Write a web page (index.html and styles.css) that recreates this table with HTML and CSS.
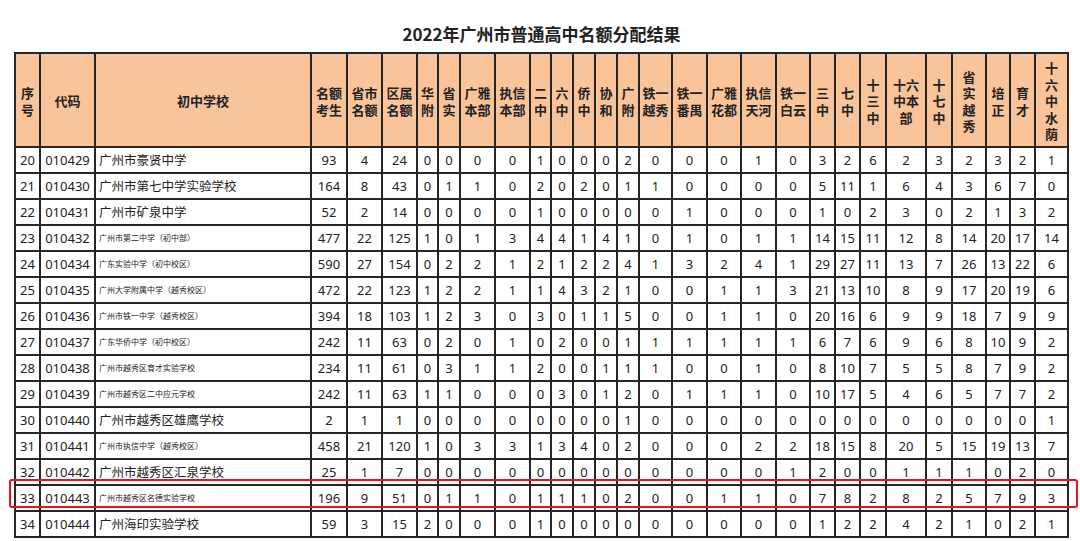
FILE: index.html
```html
<!DOCTYPE html>
<html lang="zh-CN">
<head>
<meta charset="utf-8">
<title>2022年广州市普通高中名额分配结果</title>
<link rel="stylesheet" href="styles.css">
</head>
<body>
<div class="page">
  <h1 class="title">2022年广州市普通高中名额分配结果</h1>
  <div class="sheet">
    <table class="quota">
      <colgroup>
        <col class="w25"><col class="w55"><col class="w216"><col class="w36"><col class="w35"><col class="w35">
        <col class="w21"><col class="w22"><col class="w35"><col class="w35"><col class="w21"><col class="w22">
        <col class="w22"><col class="w22"><col class="w22"><col class="w33"><col class="w35"><col class="w34">
        <col class="w35"><col class="w34"><col class="w25"><col class="w25"><col class="w26"><col class="w40">
        <col class="w26"><col class="w34"><col class="w24"><col class="w25"><col class="w33">
      </colgroup>
      <thead>
        <tr>
          <th>序<br>号</th><th>代码</th><th>初中学校</th><th>名额<br>考生</th><th>省市<br>名额</th><th>区属<br>名额</th>
          <th>华<br>附</th><th>省<br>实</th><th>广雅<br>本部</th><th>执信<br>本部</th><th>二<br>中</th><th>六<br>中</th>
          <th>侨<br>中</th><th>协<br>和</th><th>广<br>附</th><th>铁一<br>越秀</th><th>铁一<br>番禺</th><th>广雅<br>花都</th>
          <th>执信<br>天河</th><th>铁一<br>白云</th><th>三<br>中</th><th>七<br>中</th><th>十<br>三<br>中</th><th>十六<br>中本<br>部</th>
          <th>十<br>七<br>中</th><th>省<br>实<br>越<br>秀</th><th>培<br>正</th><th>育<br>才</th><th>十<br>六<br>中<br>水<br>荫</th>
        </tr>
      </thead>
      <tbody>
        <tr><td>20</td><td>010429</td><td class="name">广州市豪贤中学</td><td>93</td><td>4</td><td>24</td><td>0</td><td>0</td><td>0</td><td>0</td><td>1</td><td>0</td><td>0</td><td>0</td><td>2</td><td>0</td><td>0</td><td>0</td><td>1</td><td>0</td><td>3</td><td>2</td><td>6</td><td>2</td><td>3</td><td>2</td><td>3</td><td>2</td><td>1</td></tr>
        <tr><td>21</td><td>010430</td><td class="name">广州市第七中学实验学校</td><td>164</td><td>8</td><td>43</td><td>0</td><td>1</td><td>1</td><td>0</td><td>2</td><td>0</td><td>2</td><td>0</td><td>1</td><td>1</td><td>0</td><td>0</td><td>0</td><td>0</td><td>5</td><td>11</td><td>1</td><td>6</td><td>4</td><td>3</td><td>6</td><td>7</td><td>0</td></tr>
        <tr><td>22</td><td>010431</td><td class="name">广州市矿泉中学</td><td>52</td><td>2</td><td>14</td><td>0</td><td>0</td><td>0</td><td>0</td><td>1</td><td>0</td><td>0</td><td>0</td><td>0</td><td>0</td><td>1</td><td>0</td><td>0</td><td>0</td><td>1</td><td>0</td><td>2</td><td>3</td><td>0</td><td>2</td><td>1</td><td>3</td><td>2</td></tr>
        <tr><td>23</td><td>010432</td><td class="name small">广州市第二中学（初中部）</td><td>477</td><td>22</td><td>125</td><td>1</td><td>0</td><td>1</td><td>3</td><td>4</td><td>4</td><td>1</td><td>4</td><td>1</td><td>0</td><td>1</td><td>0</td><td>1</td><td>1</td><td>14</td><td>15</td><td>11</td><td>12</td><td>8</td><td>14</td><td>20</td><td>17</td><td>14</td></tr>
        <tr><td>24</td><td>010434</td><td class="name small">广东实验中学（初中校区）</td><td>590</td><td>27</td><td>154</td><td>0</td><td>2</td><td>2</td><td>1</td><td>2</td><td>1</td><td>2</td><td>2</td><td>4</td><td>1</td><td>3</td><td>2</td><td>4</td><td>1</td><td>29</td><td>27</td><td>11</td><td>13</td><td>7</td><td>26</td><td>13</td><td>22</td><td>6</td></tr>
        <tr><td>25</td><td>010435</td><td class="name small">广州大学附属中学（越秀校区）</td><td>472</td><td>22</td><td>123</td><td>1</td><td>2</td><td>2</td><td>1</td><td>1</td><td>4</td><td>3</td><td>2</td><td>1</td><td>0</td><td>0</td><td>1</td><td>1</td><td>3</td><td>21</td><td>13</td><td>10</td><td>8</td><td>9</td><td>17</td><td>20</td><td>19</td><td>6</td></tr>
        <tr><td>26</td><td>010436</td><td class="name small">广州市铁一中学（越秀校区）</td><td>394</td><td>18</td><td>103</td><td>1</td><td>2</td><td>3</td><td>0</td><td>3</td><td>0</td><td>1</td><td>1</td><td>5</td><td>0</td><td>0</td><td>1</td><td>1</td><td>0</td><td>20</td><td>16</td><td>6</td><td>9</td><td>9</td><td>18</td><td>7</td><td>9</td><td>9</td></tr>
        <tr><td>27</td><td>010437</td><td class="name small">广东华侨中学（初中校区）</td><td>242</td><td>11</td><td>63</td><td>0</td><td>2</td><td>0</td><td>1</td><td>0</td><td>2</td><td>0</td><td>0</td><td>1</td><td>1</td><td>1</td><td>1</td><td>1</td><td>1</td><td>6</td><td>7</td><td>6</td><td>9</td><td>6</td><td>8</td><td>10</td><td>9</td><td>2</td></tr>
        <tr><td>28</td><td>010438</td><td class="name small">广州市越秀区育才实验学校</td><td>234</td><td>11</td><td>61</td><td>0</td><td>3</td><td>1</td><td>1</td><td>2</td><td>0</td><td>0</td><td>1</td><td>1</td><td>1</td><td>0</td><td>0</td><td>1</td><td>0</td><td>8</td><td>10</td><td>7</td><td>5</td><td>5</td><td>8</td><td>7</td><td>9</td><td>2</td></tr>
        <tr><td>29</td><td>010439</td><td class="name small">广州市越秀区二中应元学校</td><td>242</td><td>11</td><td>63</td><td>1</td><td>1</td><td>0</td><td>0</td><td>0</td><td>3</td><td>0</td><td>1</td><td>2</td><td>0</td><td>1</td><td>1</td><td>1</td><td>0</td><td>10</td><td>17</td><td>5</td><td>4</td><td>6</td><td>5</td><td>7</td><td>7</td><td>2</td></tr>
        <tr><td>30</td><td>010440</td><td class="name">广州市越秀区雄鹰学校</td><td>2</td><td>1</td><td>1</td><td>0</td><td>0</td><td>0</td><td>0</td><td>0</td><td>0</td><td>0</td><td>0</td><td>1</td><td>0</td><td>0</td><td>0</td><td>0</td><td>0</td><td>0</td><td>0</td><td>0</td><td>0</td><td>0</td><td>0</td><td>0</td><td>0</td><td>1</td></tr>
        <tr><td>31</td><td>010441</td><td class="name small">广州市执信中学（越秀校区）</td><td>458</td><td>21</td><td>120</td><td>1</td><td>0</td><td>3</td><td>3</td><td>1</td><td>3</td><td>4</td><td>0</td><td>2</td><td>0</td><td>0</td><td>0</td><td>2</td><td>2</td><td>18</td><td>15</td><td>8</td><td>20</td><td>5</td><td>15</td><td>19</td><td>13</td><td>7</td></tr>
        <tr><td>32</td><td>010442</td><td class="name">广州市越秀区汇泉学校</td><td>25</td><td>1</td><td>7</td><td>0</td><td>0</td><td>0</td><td>0</td><td>0</td><td>0</td><td>0</td><td>0</td><td>0</td><td>0</td><td>0</td><td>0</td><td>0</td><td>1</td><td>2</td><td>0</td><td>0</td><td>1</td><td>1</td><td>1</td><td>0</td><td>2</td><td>0</td></tr>
        <tr><td>33</td><td>010443</td><td class="name small">广州市越秀区名德实验学校</td><td>196</td><td>9</td><td>51</td><td>0</td><td>1</td><td>1</td><td>0</td><td>1</td><td>1</td><td>1</td><td>0</td><td>2</td><td>0</td><td>0</td><td>1</td><td>1</td><td>0</td><td>7</td><td>8</td><td>2</td><td>8</td><td>2</td><td>5</td><td>7</td><td>9</td><td>3</td></tr>
        <tr><td>34</td><td>010444</td><td class="name">广州海印实验学校</td><td>59</td><td>3</td><td>15</td><td>2</td><td>0</td><td>0</td><td>0</td><td>1</td><td>0</td><td>0</td><td>0</td><td>0</td><td>0</td><td>0</td><td>0</td><td>0</td><td>0</td><td>1</td><td>2</td><td>2</td><td>4</td><td>2</td><td>1</td><td>0</td><td>2</td><td>1</td></tr>
      </tbody>
    </table>
    <div class="highlight"></div>
  </div>
</div>
</body>
</html>
```

FILE: styles.css
```css
html, body {
  margin: 0;
  padding: 0;
  background: #ffffff;
}

body {
  font-family: "Noto Sans", "Noto Sans CJK SC", sans-serif;
  color: #222222;
}

.page {
  width: 1080px;
  height: 541px;
  padding: 23px 0 0 14px;
  box-sizing: border-box;
  overflow: hidden;
}

.title {
  margin: 0 0 8px 0;
  width: 1055px;
  text-align: center;
  font-family: "Noto Sans CJK SC", sans-serif;
  font-size: 17px;
  line-height: 21px;
  font-weight: 700;
  color: #222222;
}

.sheet {
  position: relative;
  width: 1055px;
}

.quota {
  border-collapse: collapse;
  table-layout: fixed;
  width: 1055px;
  border: 2px solid #222222;
}

.quota th,
.quota td {
  border: 2px solid #262626;
  padding: 0;
  text-align: center;
  vertical-align: middle;
  overflow: hidden;
  white-space: nowrap;
}

.quota th {
  background: #f9c499;
  height: 89px;
  font-family: "Noto Sans CJK SC", sans-serif;
  font-size: 13px;
  line-height: 16.5px;
  font-weight: 700;
  color: #222222;
  padding-top: 3px;
}

.quota td {
  height: 24px;
  font-size: 13px;
  line-height: 16px;
  color: #222222;
}

.quota td.name {
  text-align: left;
  padding-left: 3px;
  font-family: "Noto Sans CJK SC", sans-serif;
  font-size: 12.5px;
}

.quota td.small {
  font-size: 8px;
}

.highlight {
  position: absolute;
  left: -5px;
  top: 427px;
  width: 1069px;
  height: 29px;
  box-sizing: border-box;
  border: 2px solid #e8141c;
  border-radius: 3px;
  pointer-events: none;
}

.w21 { width: 21px; }
.w22 { width: 22px; }
.w24 { width: 24px; }
.w25 { width: 25px; }
.w26 { width: 26px; }
.w33 { width: 33px; }
.w34 { width: 34px; }
.w35 { width: 35px; }
.w36 { width: 36px; }
.w40 { width: 40px; }
.w55 { width: 55px; }
.w216 { width: 216px; }
```
